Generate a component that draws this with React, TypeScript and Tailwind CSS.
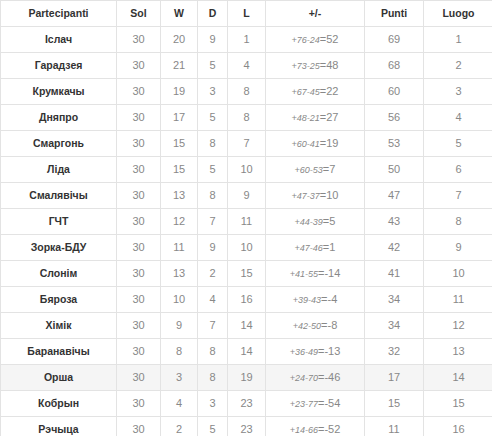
import React from 'react';

type Row = { team: string; sol: number; w: number; d: number; l: number; gf: number; ga: number; diff: number; pts: number; pos: number };

const rows: Row[] = [
  { team: 'Іслач', sol: 30, w: 20, d: 9, l: 1, gf: 76, ga: 24, diff: 52, pts: 69, pos: 1 },
  { team: 'Гарадзея', sol: 30, w: 21, d: 5, l: 4, gf: 73, ga: 25, diff: 48, pts: 68, pos: 2 },
  { team: 'Крумкачы', sol: 30, w: 19, d: 3, l: 8, gf: 67, ga: 45, diff: 22, pts: 60, pos: 3 },
  { team: 'Дняпро', sol: 30, w: 17, d: 5, l: 8, gf: 48, ga: 21, diff: 27, pts: 56, pos: 4 },
  { team: 'Смаргонь', sol: 30, w: 15, d: 8, l: 7, gf: 60, ga: 41, diff: 19, pts: 53, pos: 5 },
  { team: 'Ліда', sol: 30, w: 15, d: 5, l: 10, gf: 60, ga: 53, diff: 7, pts: 50, pos: 6 },
  { team: 'Смалявічы', sol: 30, w: 13, d: 8, l: 9, gf: 47, ga: 37, diff: 10, pts: 47, pos: 7 },
  { team: 'ГЧТ', sol: 30, w: 12, d: 7, l: 11, gf: 44, ga: 39, diff: 5, pts: 43, pos: 8 },
  { team: 'Зорка-БДУ', sol: 30, w: 11, d: 9, l: 10, gf: 47, ga: 46, diff: 1, pts: 42, pos: 9 },
  { team: 'Слонім', sol: 30, w: 13, d: 2, l: 15, gf: 41, ga: 55, diff: -14, pts: 41, pos: 10 },
  { team: 'Бяроза', sol: 30, w: 10, d: 4, l: 16, gf: 39, ga: 43, diff: -4, pts: 34, pos: 11 },
  { team: 'Хімік', sol: 30, w: 9, d: 7, l: 14, gf: 42, ga: 50, diff: -8, pts: 34, pos: 12 },
  { team: 'Баранавічы', sol: 30, w: 8, d: 8, l: 14, gf: 36, ga: 49, diff: -13, pts: 32, pos: 13 },
  { team: 'Орша', sol: 30, w: 3, d: 8, l: 19, gf: 24, ga: 70, diff: -46, pts: 17, pos: 14 },
  { team: 'Кобрын', sol: 30, w: 4, d: 3, l: 23, gf: 23, ga: 77, diff: -54, pts: 15, pos: 15 },
  { team: 'Рэчыца', sol: 30, w: 2, d: 5, l: 23, gf: 14, ga: 66, diff: -52, pts: 11, pos: 16 },
];

const cell = 'border border-[#e3e3e3] text-center align-middle p-0';

export default function App() {
  return (
    <div className="w-[492px] h-[436px] overflow-hidden bg-white font-['Liberation_Sans',Arial,sans-serif]">
      <table className="table-fixed border-collapse w-[493px]">
        <colgroup>
          <col className="w-[116px]" />
          <col className="w-[44px]" />
          <col className="w-[37px]" />
          <col className="w-[30px]" />
          <col className="w-[38px]" />
          <col className="w-[99px]" />
          <col className="w-[59px]" />
          <col className="w-[70px]" />
        </colgroup>
        <thead>
          <tr className="h-[26px] text-[10.5px] font-bold text-[#333]">
            <th className={cell}>Partecipanti</th>
            <th className={cell}>Sol</th>
            <th className={cell}>W</th>
            <th className={cell}>D</th>
            <th className={cell}>L</th>
            <th className={cell}>+/-</th>
            <th className={cell}>Punti</th>
            <th className={cell}>Luogo</th>
          </tr>
        </thead>
        <tbody>
          {rows.map((r) => (
            <tr key={r.team} className={`h-[26px] text-[11px] text-[#888] ${r.team === 'Орша' ? 'bg-[#f5f5f5]' : ''}`}>
              <td className={`${cell} text-[10.5px] font-bold text-[#333]`}>{r.team}</td>
              <td className={cell}>{r.sol}</td>
              <td className={cell}>{r.w}</td>
              <td className={cell}>{r.d}</td>
              <td className={cell}>{r.l}</td>
              <td className={cell}>
                <i className="text-[9px]">+{r.gf}-{r.ga}</i>={r.diff}
              </td>
              <td className={cell}>{r.pts}</td>
              <td className={cell}>{r.pos}</td>
            </tr>
          ))}
        </tbody>
      </table>
    </div>
  );
}
